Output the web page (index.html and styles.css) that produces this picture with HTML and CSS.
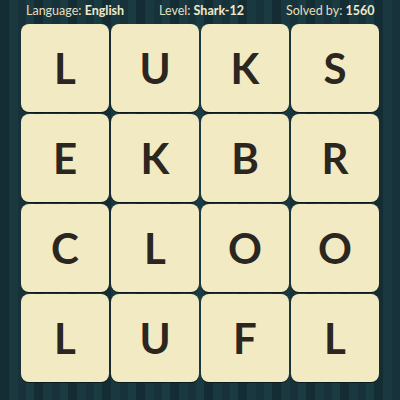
FILE: index.html
```html
<!DOCTYPE html>
<html>
<head>
<meta charset="utf-8">
<link rel="stylesheet" href="styles.css">
</head>
<body>
<div class="page">
  <div class="header">
    <span class="info">Language: <b>English</b></span>
    <span class="info">Level: <b>Shark-12</b></span>
    <span class="info">Solved by: <b>1560</b></span>
  </div>
  <div class="board">
    <div class="tile">L</div><div class="tile">U</div><div class="tile">K</div><div class="tile">S</div>
    <div class="tile">E</div><div class="tile">K</div><div class="tile">B</div><div class="tile">R</div>
    <div class="tile">C</div><div class="tile">L</div><div class="tile">O</div><div class="tile">O</div>
    <div class="tile">L</div><div class="tile">U</div><div class="tile">F</div><div class="tile">L</div>
  </div>
</div>
</body>
</html>
```
FILE: styles.css
```css
html, body {
  margin: 0;
  padding: 0;
}
body {
  width: 400px;
  height: 400px;
  overflow: hidden;
  background-color: #163139;
  background-image: repeating-linear-gradient(90deg,
    #142c33 0px, #142c33 9px,
    #1a3840 9px, #1a3840 18px,
    #173239 18px, #173239 26px,
    #1b3b42 26px, #1b3b42 34px);
  font-family: "Lato", "Open Sans", sans-serif;
}
.page {
  width: 400px;
  height: 400px;
}
.header {
  display: grid;
  grid-template-columns: 133px 127px auto;
  padding-left: 26px;
  height: 24px;
  align-items: center;
  color: #e6dfbd;
  font-size: 12.5px;
  line-height: 1;
  box-sizing: border-box;
  padding-bottom: 1px;
}
.info b {
  font-weight: 700;
  color: #f1eacb;
}
.board {
  display: grid;
  grid-template-columns: repeat(4, 88px);
  grid-auto-rows: 88px;
  gap: 2px;
  padding-left: 21px;
}
.tile {
  background: #f2eac3;
  border-radius: 8px;
  box-shadow: 0 1px 0 #0b1a1e;
  display: flex;
  align-items: center;
  justify-content: center;
  color: #2b2720;
  font-size: 42px;
  font-weight: 700;
  line-height: 1;
}
```
